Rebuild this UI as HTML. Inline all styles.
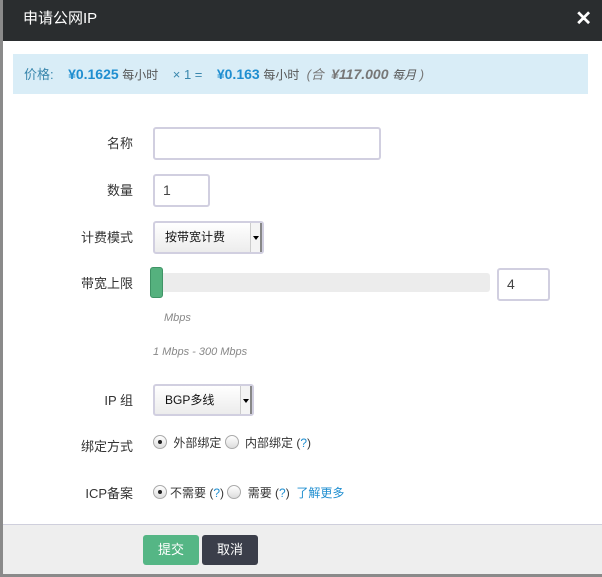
<!DOCTYPE html>
<html><head><meta charset="utf-8"><style>
*{box-sizing:border-box;margin:0;padding:0}
body{width:602px;height:577px;overflow:hidden;background:#8a8a8a;font-family:"Liberation Sans","Noto Sans CJK SC",sans-serif;position:relative;color:#333}
.modal{position:absolute;left:3px;top:0;width:599px;height:574px;background:#fff}
.hdr{position:absolute;left:0;top:0;width:599px;height:41px;background:#2a2d2f;color:#fff;font-size:15px;line-height:38px;padding-left:20px}
.x{position:absolute;right:10px;top:0;font-size:20px;font-weight:bold}
.alert{position:absolute;left:10px;top:54px;width:575px;height:40px;background:#d9edf7;font-size:13px;line-height:40px;padding-left:11px;color:#3a87ad;white-space:nowrap}
.alert b{color:#1f8ed0;font-size:14px}
.alert s{text-decoration:none;color:#555;font-size:12px}
.alert i{color:#777}
.lab{position:absolute;right:469px;font-size:13px;color:#333;text-align:right}
.inp{position:absolute;border:2px solid #d1cfe0;border-radius:3px;background:#fff;font-size:14px;line-height:29px;padding-left:8px;color:#444}
.sel{position:absolute;border:2px solid #d1cfe0;border-radius:3px;background:linear-gradient(#fff,#ececec);font-size:12px;line-height:29px;padding-left:10px;color:#111}
.sel:after{content:"";position:absolute;right:0;top:0;width:9px;height:100%;background:#f4f4f4;border-left:1px solid #ccc;border-right:2px solid #888}
.sel span.a{position:absolute;right:3px;top:13px;border:3px solid transparent;border-top:4px solid #000;z-index:2}
.radio{display:inline-block;width:14px;height:14px;border:1px solid #aaa;border-radius:50%;background:linear-gradient(#fff,#ddd);vertical-align:-2px;position:relative;margin-right:3px}
.radio.on:after{content:"";position:absolute;left:4px;top:4px;width:4px;height:4px;border-radius:50%;background:#222}
.row{position:absolute;left:150px;font-size:12px;color:#333;white-space:nowrap}
.q{color:#1f8ed0}
.foot{position:absolute;left:0;top:524px;width:599px;height:50px;background:#eee;border-top:1px solid #cfcfdc}
.btn{position:absolute;top:10px;height:30px;border-radius:3px;color:#fff;font-size:13px;line-height:30px;text-align:center;width:56px}
</style></head><body>
<div class="modal">
<div class="hdr">申请公网IP<span class="x">✕</span></div>
<div class="alert">价格: &nbsp;&nbsp; <b>¥0.1625</b> <s>每小时</s> &nbsp;&nbsp; × 1 = &nbsp;&nbsp; <b>¥0.163</b> <s>每小时</s> &nbsp;<i>(合 &nbsp;<b style="color:#777;font-style:italic">¥117.000</b> <s>每月</s> )</i></div>

<div class="lab" style="top:133px">名称</div>
<div class="inp" style="left:150px;top:127px;width:228px;height:33px"></div>
<div class="lab" style="top:180px">数量</div>
<div class="inp" style="left:150px;top:174px;width:57px;height:33px">1</div>
<div class="lab" style="top:227px">计费模式</div>
<div class="sel" style="left:150px;top:221px;width:111px;height:33px">按带宽计费<span class="a"></span></div>
<div class="lab" style="top:273px">带宽上限</div>
<div style="position:absolute;left:149px;top:273px;width:338px;height:19px;background:#ececec;border-radius:3px"></div>
<div style="position:absolute;left:147px;top:267px;width:13px;height:31px;background:#55b17e;border:1px solid #3f9466;border-radius:3px"></div>
<div class="inp" style="left:494px;top:268px;width:53px;height:33px">4</div>
<div style="position:absolute;left:161px;top:312px;font-size:11px;font-style:italic;color:#888">Mbps</div>
<div style="position:absolute;left:150px;top:346px;font-size:11px;font-style:italic;color:#888">1 Mbps - 300 Mbps</div>
<div class="lab" style="top:390px">IP 组</div>
<div class="sel" style="left:150px;top:384px;width:101px;height:32px">BGP多线<span class="a"></span></div>
<div class="lab" style="top:436px">绑定方式</div>
<div class="row" style="top:434px"><span class="radio on"></span> 外部绑定 <span class="radio"></span> 内部绑定 (<span class="q">?</span>)</div>
<div class="lab" style="top:483px">ICP备案</div>
<div class="row" style="top:484px"><span class="radio on"></span>不需要 (<span class="q">?</span>) <span class="radio"></span> 需要 (<span class="q">?</span>) &nbsp;<span class="q">了解更多</span></div>
<div class="foot">
<div class="btn" style="left:140px;background:#55b685">提交</div>
<div class="btn" style="left:199px;width:56px;background:#3b3e4a">取消</div>
</div>
</div>
</body></html>
